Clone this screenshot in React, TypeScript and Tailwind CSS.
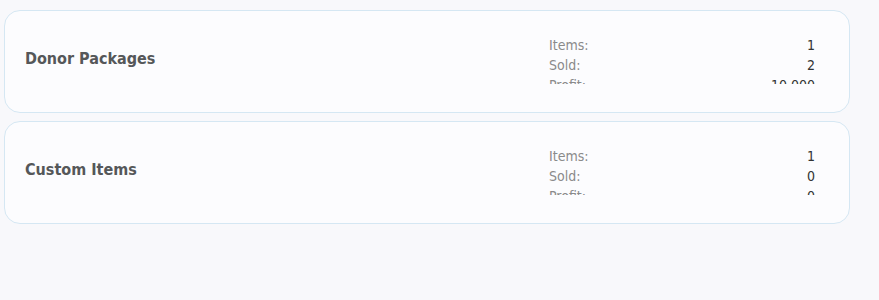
export default function App() {
  const groups = [
    { name: "Donor Packages", items: "1", sold: "2", profit: "10,000" },
    { name: "Custom Items", items: "1", sold: "0", profit: "0" },
  ]

  return (
    <div
      className="h-[300px] w-[879px] bg-[#f8f8fb] pt-[10px] pl-[4px]"
      style={{ fontFamily: '"DejaVu Sans Condensed", "DejaVu Sans", sans-serif' }}
    >
      <div className="flex w-[846px] flex-col gap-[8px]">
        {groups.map((g) => (
          <div
            key={g.name}
            className="flex h-[103px] items-center rounded-[16px] border border-[#d5e7f3] bg-[#fcfcfe] pb-[5px] pl-[20px] pr-[34px]"
          >
            <div className="flex-1 text-[16px] font-bold text-[#555759]">{g.name}</div>
            <div className="h-[49px] w-[266px] overflow-hidden text-[14px] leading-[20px]">
              <div className="flex justify-between">
                <span className="text-[#8a8a8a]">Items:</span>
                <span className="text-[#333]">{g.items}</span>
              </div>
              <div className="flex justify-between">
                <span className="text-[#8a8a8a]">Sold:</span>
                <span className="text-[#333]">{g.sold}</span>
              </div>
              <div className="flex justify-between">
                <span className="text-[#8a8a8a]">Profit:</span>
                <span className="text-[#333]">{g.profit}</span>
              </div>
            </div>
          </div>
        ))}
      </div>
    </div>
  )
}
